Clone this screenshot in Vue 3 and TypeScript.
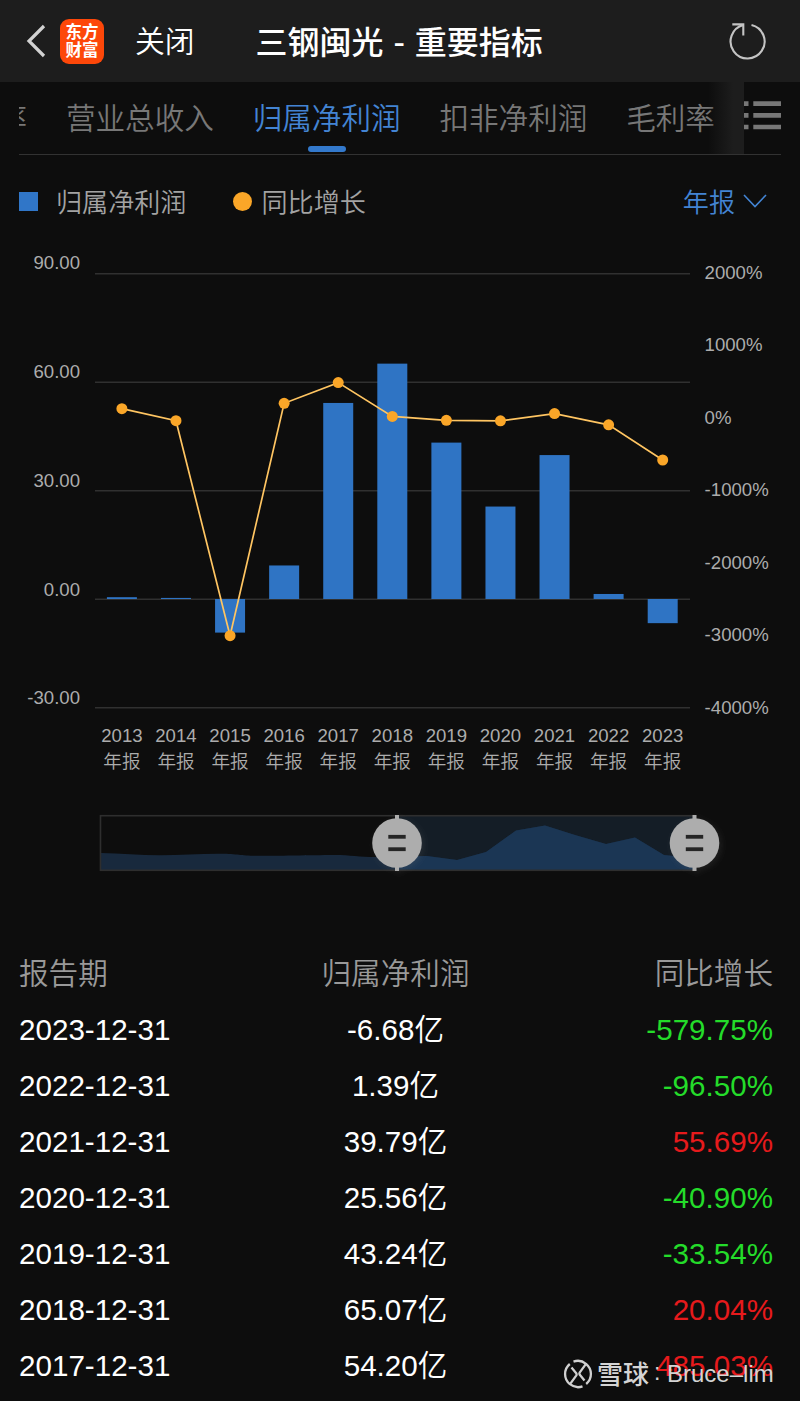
<script setup lang="ts">
interface YearPoint {
  year: number
  profit: number
  lineY: number
}

interface ReportRow {
  date: string
  profit: string
  growth: string
  up: boolean
}

const tabs = ['率', '营业总收入', '归属净利润', '扣非净利润', '毛利率']
const activeTab = '归属净利润'

const points: YearPoint[] = [
  { year: 2013, profit: 0.5, lineY: 408.7 },
  { year: 2014, profit: 0.3, lineY: 420.7 },
  { year: 2015, profit: -9.29, lineY: 635.7 },
  { year: 2016, profit: 9.27, lineY: 403.3 },
  { year: 2017, profit: 54.2, lineY: 382.6 },
  { year: 2018, profit: 65.07, lineY: 416.4 },
  { year: 2019, profit: 43.24, lineY: 420.3 },
  { year: 2020, profit: 25.56, lineY: 420.8 },
  { year: 2021, profit: 39.79, lineY: 413.6 },
  { year: 2022, profit: 1.39, lineY: 424.8 },
  { year: 2023, profit: -6.68, lineY: 460 },
]

const zeroY = 599
const unit = 3.617
const cx = (i: number): number => 121.9 + i * 54.08
const barTop = (p: number): number => (p > 0 ? zeroY - p * unit : zeroY)
const barHeight = (p: number): number => Math.abs(p) * unit
const linePoints = points.map((p, i) => `${cx(i)},${p.lineY}`).join(' ')

const gridYs = [273.7, 382.2, 490.7, 599.3, 707.8]
const leftLabels = ['90.00', '60.00', '30.00', '0.00', '-30.00']
const rightLabels = ['2000%', '1000%', '0%', '-1000%', '-2000%', '-3000%', '-4000%']

const areaPath =
  'M101 853C120 853.5 140 855.2 160 855.2S200 853.6 220 853.7S240 855.8 260 855.8S320 854.9 335 854.9S360 857 375 857L427 856L457 860L486 852L516 830.5L545 825.5L575 835L606 844L635 837.5L664 855L694 858V870H101Z'
const handles = [397, 694.5]

const rows: ReportRow[] = [
  { date: '2023-12-31', profit: '-6.68亿', growth: '-579.75%', up: false },
  { date: '2022-12-31', profit: '1.39亿', growth: '-96.50%', up: false },
  { date: '2021-12-31', profit: '39.79亿', growth: '55.69%', up: true },
  { date: '2020-12-31', profit: '25.56亿', growth: '-40.90%', up: false },
  { date: '2019-12-31', profit: '43.24亿', growth: '-33.54%', up: false },
  { date: '2018-12-31', profit: '65.07亿', growth: '20.04%', up: true },
  { date: '2017-12-31', profit: '54.20亿', growth: '485.03%', up: true },
]
</script>

<template>
  <div class="page">
    <header class="topbar">
      <svg class="back" width="20" height="34" viewBox="0 0 20 34">
        <path d="M18 2L3 17L18 32" fill="none" stroke="#d2d2d2" stroke-width="3.2" />
      </svg>
      <div class="logo"><span>东方</span><span>财富</span></div>
      <span class="close">关闭</span>
      <h1 class="title">三钢闽光 - 重要指标</h1>
      <svg class="refresh" width="40" height="40" viewBox="0 0 40 40">
        <path d="M23.5 3.9A17 17 0 1 1 15.3 4" fill="none" stroke="#c4c4c4" stroke-width="2.1" />
        <path d="M4.3 3.4H15.3V14.6" fill="none" stroke="#c4c4c4" stroke-width="2.1" />
      </svg>
    </header>

    <nav class="nav">
      <div class="tabs">
        <div class="track">
          <span v-for="t in tabs" :key="t" class="tab" :class="{ active: t === activeTab }">{{ t }}</span>
        </div>
        <div class="fade"></div>
      </div>
      <svg class="menu" width="37" height="30" viewBox="0 0 37 30">
        <path d="M0 2.6H4.5M9.3 2.6H37.5M0 14.4H4.5M9.3 14.4H37.5M0 26H4.5M9.3 26H37.5" stroke="#777" stroke-width="4.6" />
      </svg>
    </nav>

    <div class="legend">
      <i class="square"></i>
      <span class="profit-label">归属净利润</span>
      <i class="dot"></i>
      <span>同比增长</span>
      <span class="period">年报</span>
      <svg class="chevron" width="24" height="15" viewBox="0 0 24 15">
        <path d="M1 1L12 12.5L23 1" fill="none" stroke="#4384d3" stroke-width="1.6" />
      </svg>
    </div>

    <svg class="chart" width="800" height="650" viewBox="0 240 800 650">
      <defs>
        <filter id="glow" x="-40%" y="-40%" width="180%" height="180%">
          <feDropShadow dx="2" dy="2" stdDeviation="3" flood-color="#777" flood-opacity="0.18" />
        </filter>
      </defs>
      <line v-for="y in gridYs" :key="y" x1="95" x2="690" :y1="y" :y2="y" stroke="#303030" stroke-width="1.5" />
      <text v-for="(l, i) in leftLabels" :key="l" class="axis" x="80" :y="269.4 + i * 108.75" text-anchor="end">{{ l }}</text>
      <text v-for="(l, i) in rightLabels" :key="l" class="axis" x="704.6" :y="278.6 + i * 72.5">{{ l }}</text>
      <g v-for="(p, i) in points" :key="p.year">
        <rect :x="cx(i) - 15" :y="barTop(p.profit)" width="30" :height="barHeight(p.profit)" fill="#2f74c4" />
        <text class="axis" :x="cx(i)" y="742" text-anchor="middle">{{ p.year }}</text>
        <text class="axis cjk" :x="cx(i)" y="768" text-anchor="middle">年报</text>
      </g>
      <polyline :points="linePoints" fill="none" stroke="#ffc562" stroke-width="1.7" />
      <circle v-for="(p, i) in points" :key="'c' + p.year" :cx="cx(i)" :cy="p.lineY" r="5.5" fill="#faa628" />

      <rect x="397" y="816" width="297" height="54" fill="#141d26" />
      <path :d="areaPath" fill="#18293d" />
      <clipPath id="range"><rect x="397" y="816" width="297" height="54" /></clipPath>
      <path :d="areaPath" fill="#1b3654" clip-path="url(#range)" />
      <rect x="100.5" y="815.7" width="594" height="54.6" fill="none" stroke="#2e2e2e" stroke-width="1.6" />
      <g v-for="x in handles" :key="x">
        <g filter="url(#glow)" fill="#adadad">
          <rect :x="x - 2" y="815" width="4" height="56" />
          <circle :cx="x" cy="843" r="24.8" />
        </g>
        <rect :x="x - 8.7" y="834.9" width="17.4" height="3.8" fill="#252525" />
        <rect :x="x - 8.7" y="847.3" width="17.4" height="3.8" fill="#252525" />
      </g>
    </svg>

    <section class="table">
      <div class="row head"><span>报告期</span><span>归属净利润</span><span>同比增长</span></div>
      <div v-for="r in rows" :key="r.date" class="row">
        <span>{{ r.date }}</span>
        <span>{{ r.profit }}</span>
        <span :class="r.up ? 'up' : 'down'">{{ r.growth }}</span>
      </div>
    </section>

    <div class="watermark">
      <svg width="30" height="30" viewBox="0 0 30 30" fill="none" stroke="#d0d0d0" stroke-width="2.3" stroke-linejoin="round">
        <path d="M10.5 2.6A13 13 0 0 1 23 4.8L16.8 13.4Q16 14.6 16.8 15.8L21.5 21.5" />
        <path d="M19.5 27.4A13 13 0 0 1 7 25.2L13.2 16.6Q14 15.4 13.2 14.2L8.5 8.5" />
        <path d="M6.8 5A13 13 0 0 0 7 25.2M23.2 25A13 13 0 0 0 23 4.8" />
      </svg>
      <span class="brand">雪球</span>
      <span class="colon">:</span>
      <span class="author">Bruce–lim</span>
    </div>
  </div>
</template>

<style>
body {
  background: #0d0d0d;
}
</style>

<style scoped>
.page {
  position: relative;
  width: 800px;
  height: 1401px;
  overflow: hidden;
  background: #0d0d0d;
  color: #fff;
  font-family: "Liberation Sans", "Noto Sans CJK SC", sans-serif;
  white-space: nowrap;
}
.topbar {
  display: flex;
  align-items: center;
  box-sizing: border-box;
  height: 82px;
  padding-left: 26px;
  background: #1d1d1d;
}
.back {
  flex: none;
}
.logo {
  display: flex;
  flex-direction: column;
  justify-content: center;
  align-items: center;
  width: 44px;
  height: 45px;
  margin-left: 14px;
  border-radius: 9px;
  background: #fd4709;
  font-size: 16.5px;
  font-weight: 700;
  line-height: 18px;
}
.close {
  margin-left: 31px;
  padding-top: 2px;
  font-size: 29.8px;
  font-weight: 350;
  line-height: 44px;
}
.title {
  margin: 0 0 0 61px;
  padding-bottom: 3px;
  font-size: 32px;
  font-weight: 500;
  font-family: "Noto Sans CJK SC", sans-serif;
  line-height: 44px;
  word-spacing: 2.7px;
}
.refresh {
  margin-left: auto;
  margin-right: 32px;
}
.nav {
  display: flex;
  box-sizing: border-box;
  height: 73px;
  margin: 0 19px;
  border-bottom: 1.5px solid #323232;
}
.tabs {
  position: relative;
  width: 725px;
  overflow: hidden;
}
.track {
  display: flex;
  gap: 38.8px;
  margin-left: -21.5px;
}
.tab {
  display: flex;
  flex-direction: column;
  flex: none;
  align-items: center;
  height: 73px;
  color: #777;
  font-size: 29.6px;
  font-weight: 350;
  line-height: 73px;
}
.tab.active {
  color: #4384d3;
}
.tab.active::after {
  content: "";
  width: 38px;
  height: 6px;
  margin-top: -9px;
  border-radius: 3px;
  background: #3379cc;
}
.fade {
  position: absolute;
  top: 0;
  right: 0;
  width: 36px;
  height: 73px;
  background: linear-gradient(90deg, transparent, #1d1d1d 70%);
}
.menu {
  margin-top: 19px;
}
.legend {
  display: flex;
  align-items: center;
  height: 85px;
  padding: 7px 33px 0 19px;
  box-sizing: border-box;
  color: #a3a3a3;
  font-size: 26.1px;
  font-weight: 350;
}
.square {
  width: 19px;
  height: 19px;
  margin-right: 18px;
  background: #3076c8;
}
.profit-label {
  margin-right: 46.5px;
}
.dot {
  width: 19px;
  height: 19px;
  margin-right: 9.5px;
  border-radius: 50%;
  background: #faa628;
}
.period {
  margin-left: auto;
  color: #4384d3;
}
.chevron {
  margin-left: 8px;
}
.chart {
  display: block;
}
.axis {
  fill: #acacac;
  font-size: 18.6px;
}
.cjk {
  font-weight: 350;
}
.table {
  display: flex;
  flex-direction: column;
  margin: 56px 27px 0 19px;
}
.row {
  display: grid;
  grid-template-columns: 251px 251px 1fr;
  height: 56px;
  font-size: 29.6px;
  font-weight: 350;
  line-height: 56px;
}
.row span:nth-child(2) {
  text-align: center;
}
.row span:nth-child(3) {
  text-align: right;
}
.head {
  color: #999;
}
.up {
  color: #e61a1c;
}
.down {
  color: #24dc2a;
}
.watermark {
  position: absolute;
  left: 563px;
  top: 1359px;
  display: flex;
  align-items: center;
  height: 30px;
  color: #d4d4d4;
}
.brand {
  margin-left: 4px;
  padding-bottom: 3px;
  font-size: 26px;
  font-weight: 500;
}
.colon {
  width: 13px;
  margin-left: 5px;
  padding-bottom: 3px;
  font-size: 23px;
}
.author {
  font-size: 24px;
}
</style>
